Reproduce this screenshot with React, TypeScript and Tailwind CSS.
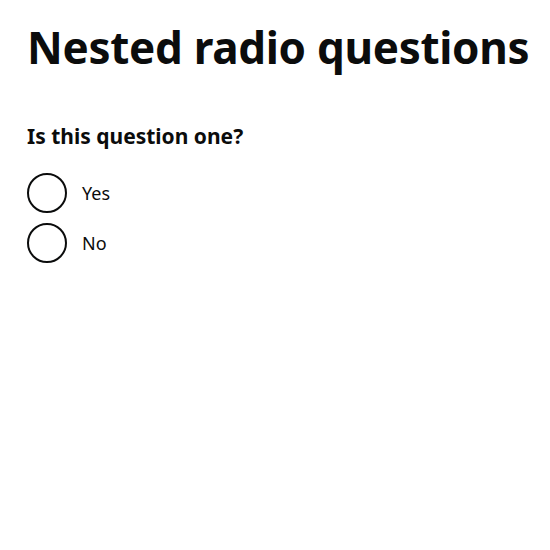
export default function App() {
  const opts = ["Yes", "No"];
  return (
    <div className="min-h-[550px] bg-white px-[27px] pt-[22px] text-[#0b0c0c]" style={{ fontFamily: '"Noto Sans", Arial, sans-serif' }}>
      <h1 className="text-[44px] font-bold leading-[50px] tracking-[-0.3px] mb-[52px] whitespace-nowrap">Nested radio questions</h1>
      <fieldset>
        <legend className="text-[21px] font-bold leading-[25px] mb-[24px]">Is this question one?</legend>
        <div className="flex flex-col gap-[10px]">
          {opts.map((o) => (
            <label key={o} className="flex items-center gap-[15px]">
              <span className="w-[40px] h-[40px] rounded-full border-2 border-[#0b0c0c] shrink-0" />
              <span className="text-[18px] leading-[25px]">{o}</span>
            </label>
          ))}
        </div>
      </fieldset>
    </div>
  );
}
